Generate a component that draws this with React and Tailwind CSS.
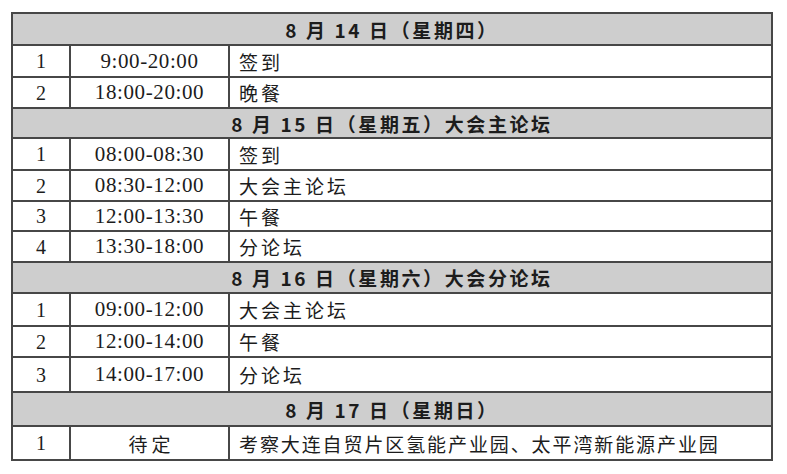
import React from "react";

const rows = [
  { type: "h", text: "8 月 14 日（星期四）", h: "h-[30px]", first: true },
  { n: "1", t: "9:00-20:00", c: "签到", h: "h-[32px]" },
  { n: "2", t: "18:00-20:00", c: "晚餐", h: "h-[31px]" },
  { type: "h", text: "8 月 15 日（星期五）大会主论坛", h: "h-[30px]" },
  { n: "1", t: "08:00-08:30", c: "签到", h: "h-[32px]" },
  { n: "2", t: "08:30-12:00", c: "大会主论坛", h: "h-[31px]" },
  { n: "3", t: "12:00-13:30", c: "午餐", h: "h-[30px]" },
  { n: "4", t: "13:30-18:00", c: "分论坛", h: "h-[31px]" },
  { type: "h", text: "8 月 16 日（星期六）大会分论坛", h: "h-[31px]" },
  { n: "1", t: "09:00-12:00", c: "大会主论坛", h: "h-[33px]" },
  { n: "2", t: "12:00-14:00", c: "午餐", h: "h-[31px]" },
  { n: "3", t: "14:00-17:00", c: "分论坛", h: "h-[35px]" },
  { type: "h", text: "8 月 17 日（星期日）", h: "h-[34px]" },
  { n: "1", t: "待定", c: "考察大连自贸片区氢能产业园、太平湾新能源产业园", h: "h-[34px]", last: true },
];

const serif = "font-['Liberation_Serif','Noto_Sans_CJK_SC',serif]";
const cjk = "font-['Noto_Sans_CJK_SC',sans-serif]";

export default function App() {
  return (
    <div className="w-[787px] h-[474px] bg-white pt-[12px] pl-[11px]">
      <div className="w-[762px] border-2 border-[#474747] flex flex-col text-[#1c1c1c]">
        {rows.map((r, i) => {
          const bt = i === 0 ? "" : "border-t-2 border-[#474747]";
          if (r.type === "h") {
            return (
              <div
                key={i}
                className={`${r.h} ${bt} bg-[#cecece] flex items-center justify-center ${cjk} font-bold text-[19px] tracking-[2.6px] leading-none`}
              >
                {r.text}
              </div>
            );
          }
          const isCjkTime = r.t === "待定";
          return (
            <div key={i} className={`${r.h} ${bt} flex`}>
              <div className={`w-[56px] flex items-center justify-center ${serif} text-[20px] leading-none`}>
                {r.n}
              </div>
              <div
                className={`w-[159px] border-l-2 border-[#474747] flex items-center justify-center leading-none ${
                  isCjkTime ? `${cjk} text-[19px] tracking-[4px] pl-[4px]` : `${serif} text-[21px] tracking-[0.6px]`
                }`}
              >
                {r.t}
              </div>
              <div
                className={`flex-1 border-l-2 border-[#474747] flex items-center pl-[9px] ${cjk} text-[19px] leading-none ${
                  r.last ? "tracking-[1.9px]" : "tracking-[3px]"
                }`}
              >
                {r.c}
              </div>
            </div>
          );
        })}
      </div>
    </div>
  );
}
